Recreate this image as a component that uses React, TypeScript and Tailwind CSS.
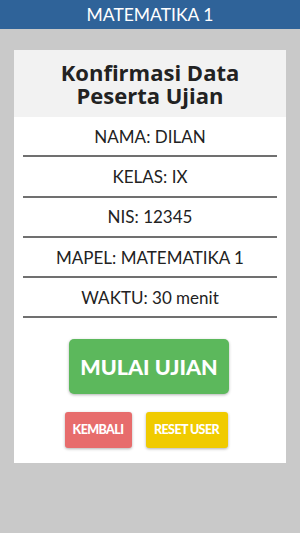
export default function App() {
  const rows = ['NAMA: DILAN', 'KELAS: IX', 'NIS: 12345', 'MAPEL: MATEMATIKA 1', 'WAKTU: 30 menit'];
  return (
    <div className="min-h-[533px] w-[300px] bg-[#c9c9c9] font-['Lato',sans-serif]">
      <div className="flex h-[29px] items-center justify-center bg-[#2f6399] text-[17.5px] leading-none text-white">
        MATEMATIKA 1
      </div>
      <div className="px-[14px] pt-[21px]">
        <div className="bg-white pb-[15px]">
          <div className="flex h-[67px] flex-col items-center justify-center bg-[#f2f2f2] font-['Open_Sans',sans-serif] text-[22px] font-bold leading-[23px] text-[#222]">
            <span>Konfirmasi Data</span>
            <span>Peserta Ujian</span>
          </div>
          <div className="px-[9px]">
            {rows.map((r) => (
              <div key={r} className="flex h-[40.3px] items-center justify-center border-b-2 border-[#707070] pt-[1px] text-[17px] text-[#222]">
                {r}
              </div>
            ))}
          </div>
          <div className="mt-[21px] flex justify-center">
            <button className="ml-[-2px] h-[55px] w-[160px] rounded-[5px] bg-[#5cb85c] text-[21.5px] font-black text-white shadow-[0_1px_3px_rgba(0,0,0,0.3)]">
              MULAI UJIAN
            </button>
          </div>
          <div className="mt-[18px] flex justify-center gap-[14px] pr-[8px]">
            <button className="h-[36px] w-[67px] rounded-[3px] bg-[#e76c6c] text-[12.5px] font-black tracking-[-0.6px] text-white shadow-[0_1px_3px_rgba(0,0,0,0.3)]">
              KEMBALI
            </button>
            <button className="h-[36px] w-[82px] rounded-[3px] bg-[#f0cb00] text-[12.5px] font-black tracking-[-0.6px] text-white shadow-[0_1px_3px_rgba(0,0,0,0.3)]">
              RESET USER
            </button>
          </div>
        </div>
      </div>
    </div>
  );
}
